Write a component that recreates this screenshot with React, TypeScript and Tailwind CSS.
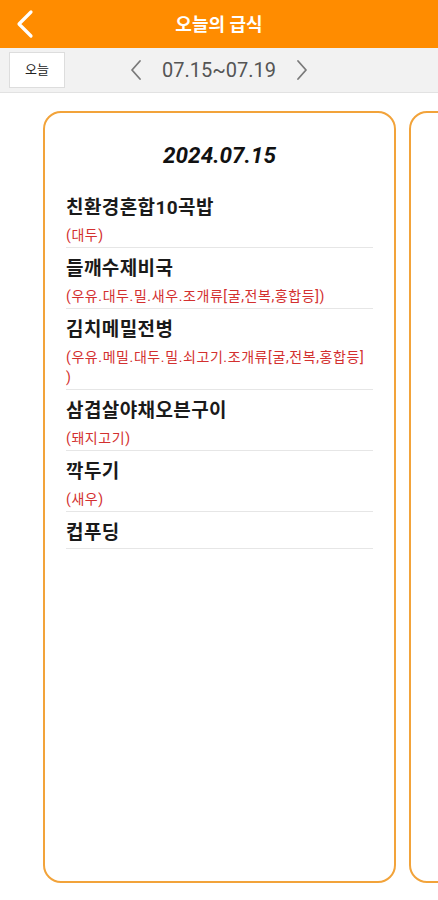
import React from "react";

const font = { fontFamily: 'Roboto, "Noto Sans CJK KR", sans-serif' };

type Item = { name: string; allergen?: React.ReactNode };

const items: Item[] = [
  { name: "친환경혼합10곡밥", allergen: "(대두)" },
  { name: "들깨수제비국", allergen: "(우유.대두.밀.새우.조개류[굴,전복,홍합등])" },
  {
    name: "김치메밀전병",
    allergen: (
      <>
        (우유.메밀.대두.밀.쇠고기.조개류[굴,전복,홍합등]
        <br />)
      </>
    ),
  },
  { name: "삼겹살야채오븐구이", allergen: "(돼지고기)" },
  { name: "깍두기", allergen: "(새우)" },
  { name: "컵푸딩" },
];

export default function App() {
  return (
    <div className="w-[438px] h-[900px] bg-white overflow-hidden flex flex-col" style={font}>
      {/* Header */}
      <div className="h-[48px] bg-[#FF8C00] flex items-center relative shrink-0">
        <div className="w-[48px] h-[48px] flex items-center justify-center pl-[1px]">
          <svg width="20" height="30" viewBox="0 0 20 30" fill="none">
            <polyline points="16,3 4,15 16,27" stroke="white" strokeWidth="3.2" strokeLinecap="round" strokeLinejoin="round" />
          </svg>
        </div>
        <div className="flex-1 text-center text-white font-bold text-[18px] leading-none pr-[48px] pt-[1px]">오늘의 급식</div>
      </div>
      {/* Sub bar */}
      <div className="h-[45px] bg-[#F2F2F2] border-b border-[#E2E2E2] flex items-center relative shrink-0">
        <div className="ml-[9px] w-[56px] h-[36px] bg-white border border-[#DDDDDD] flex items-center justify-center text-[13px] text-[#222]">
          오늘
        </div>
        <div className="absolute left-[129px] top-0 h-full flex items-center">
          <svg width="14" height="22" viewBox="0 0 14 22" fill="none">
            <polyline points="11,2 3,11 11,20" stroke="#7A7A7A" strokeWidth="1.8" strokeLinecap="round" strokeLinejoin="round" />
          </svg>
          <span className="ml-[19px] mr-[19px] text-[20px] text-[#555] leading-none">07.15~07.19</span>
          <svg width="14" height="22" viewBox="0 0 14 22" fill="none">
            <polyline points="3,2 11,11 3,20" stroke="#7A7A7A" strokeWidth="1.8" strokeLinecap="round" strokeLinejoin="round" />
          </svg>
        </div>
      </div>
      {/* Cards */}
      <div className="flex gap-[13px] pl-[43px] pt-[18px] overflow-hidden">
        <div className="w-[353px] h-[772px] shrink-0 border-2 border-[#F2A33A] rounded-[18px] px-[21px] pt-[28px]">
          <div className="text-center italic font-bold text-[22.5px] leading-[28px] text-[#111] mb-[18px]">2024.07.15</div>
          {items.map((it, i) => (
            <div
              key={it.name}
              className={`border-b border-[#E6E6E6] pt-[9px] ${i === items.length - 1 ? "pb-[3px]" : "pb-[2px]"}`}
            >
              <div className="text-[19px] leading-[24px] font-bold text-[#1A1A1A] tracking-[0.4px]">{it.name}</div>
              {it.allergen && (
                <div className="mt-[5px] text-[14px] leading-[20px] text-[#D3302F] tracking-[0.6px] whitespace-nowrap">
                  {it.allergen}
                </div>
              )}
            </div>
          ))}
        </div>
        <div className="w-[353px] h-[772px] shrink-0 border-2 border-[#F2A33A] rounded-[18px]"></div>
      </div>
    </div>
  );
}
